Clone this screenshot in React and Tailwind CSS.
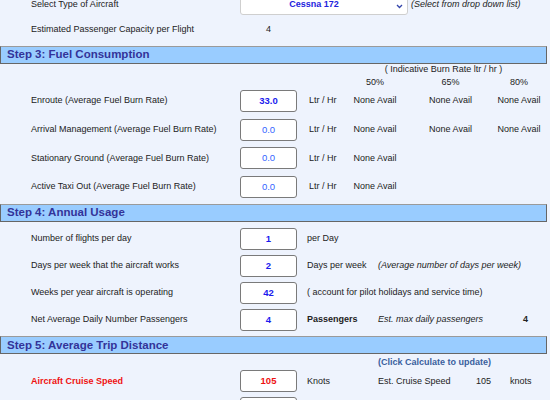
import React from "react";

const fuelRows = [
  { label: "Enroute (Average Fuel Burn Rate)", value: "33.0", bold: true, avail: 3 },
  { label: "Arrival Management (Average Fuel Burn Rate)", value: "0.0", bold: false, avail: 3 },
  { label: "Stationary Ground (Average Fuel Burn Rate)", value: "0.0", bold: false, avail: 1 },
  { label: "Active Taxi Out (Average Fuel Burn Rate)", value: "0.0", bold: false, avail: 1 },
];

const StepHeader = ({ title, className = "" }) => (
  <div
    className={`h-[18px] w-[547px] flex items-center pl-[6px] bg-[#99ccff] border border-[#666] border-t-[#9a9a9a] text-[11.5px] font-bold text-[#333399] ${className}`}
  >
    {title}
  </div>
);

const Box = ({ value, className = "" }) => (
  <div
    className={`w-[57px] h-[22px] shrink-0 bg-white border border-[#7a7a7a] rounded-[3px] flex items-center justify-center text-[9.5px] ${className}`}
  >
    {value}
  </div>
);

const Label = ({ children, className = "" }) => (
  <div className={`w-[240px] shrink-0 pl-[31px] whitespace-nowrap ${className}`}>{children}</div>
);

const App = () => {
  return (
    <div className="w-[550px] h-[400px] overflow-hidden bg-[#eef3fd] text-[#222] text-[9px] font-['Liberation_Sans',Arial,sans-serif]">
      {/* Aircraft selection */}
      <div className="flex items-center h-[20px] mt-[-5px]">
        <Label>Select Type of Aircraft</Label>
        <div className="relative w-[168px] h-[20px] bg-white border border-[#cfcfcf] rounded-[3px] flex items-center justify-center">
          <span className="font-bold text-[#2222dd] pr-[20px]">Cessna 172</span>
          <svg className="absolute right-[4px] top-[8px]" width="7" height="5" viewBox="0 0 7 5">
            <polyline points="1,1 3.5,3.5 6,1" fill="none" stroke="#3344aa" strokeWidth="1.3" />
          </svg>
        </div>
        <span className="ml-[3px] italic whitespace-nowrap">(Select from drop down list)</span>
      </div>
      <div className="flex items-center h-[20px] mt-[5px]">
        <Label>Estimated Passenger Capacity per Flight</Label>
        <div className="w-[57px] text-center">4</div>
      </div>

      {/* Step 3 */}
      <StepHeader title="Step 3: Fuel Consumption" className="mt-[6px]" />
      <div className="flex h-[12px] items-center">
        <div className="w-[337px] shrink-0" />
        <div className="w-[213px] text-center whitespace-nowrap">( Indicative Burn Rate ltr / hr )</div>
      </div>
      <div className="flex h-[12px] items-center mt-[1px]">
        <div className="w-[337px] shrink-0" />
        <div className="w-[76px] text-center">50%</div>
        <div className="w-[75px] text-center">65%</div>
        <div className="w-[62px] text-center">80%</div>
      </div>
      <div className="flex flex-col gap-[6.7px] mt-[1px]">
        {fuelRows.map((row) => (
          <div key={row.label} className="flex items-center h-[22px]">
            <Label>{row.label}</Label>
            <Box
              value={row.value}
              className={row.bold ? "font-bold text-[#1a1aee]" : "text-[#3366ff]"}
            />
            <div className="w-[40px] shrink-0 pl-[12px] whitespace-nowrap">Ltr / Hr</div>
            {Array.from({ length: row.avail }).map((_, i) => (
              <div
                key={i}
                className={`${i === 0 ? "w-[76px]" : i === 1 ? "w-[75px]" : "w-[62px]"} text-center whitespace-nowrap`}
              >
                None Avail
              </div>
            ))}
          </div>
        ))}
      </div>

      {/* Step 4 */}
      <StepHeader title="Step 4: Annual Usage" className="mt-[6px]" />
      <div className="flex flex-col gap-[4.6px] mt-[5.5px]">
        <div className="flex items-center h-[22.5px]">
          <Label>Number of flights per day</Label>
          <Box value="1" className="font-bold text-[#1a1aee]" />
          <div className="pl-[10px]">per Day</div>
        </div>
        <div className="flex items-center h-[22.5px]">
          <Label>Days per week that the aircraft works</Label>
          <Box value="2" className="font-bold text-[#1a1aee]" />
          <div className="w-[81px] shrink-0 pl-[10px] whitespace-nowrap">Days per week</div>
          <div className="italic whitespace-nowrap">(Average number of days per week)</div>
        </div>
        <div className="flex items-center h-[22.5px]">
          <Label>Weeks per year aircraft is operating</Label>
          <Box value="42" className="font-bold text-[#1a1aee]" />
          <div className="pl-[10px] whitespace-nowrap">( account for pilot holidays and service time)</div>
        </div>
        <div className="flex items-center h-[22.5px]">
          <Label>Net Average Daily Number Passengers</Label>
          <Box value="4" className="font-bold text-[#1a1aee]" />
          <div className="w-[81px] shrink-0 pl-[10px] font-bold">Passengers</div>
          <div className="w-[145px] shrink-0 italic whitespace-nowrap">Est. max daily passengers</div>
          <div className="font-bold">4</div>
        </div>
      </div>

      {/* Step 5 */}
      <StepHeader title="Step 5: Average Trip Distance" className="mt-[5px]" />
      <div className="flex items-center h-[16px]">
        <div className="w-[378px] shrink-0" />
        <div className="font-bold text-[#3a5f9e] whitespace-nowrap">(Click Calculate to update)</div>
      </div>
      <div className="flex flex-col gap-[5px]">
        <div className="flex items-center h-[22px]">
          <Label className="font-bold text-[#ee1111]">Aircraft Cruise Speed</Label>
          <Box value="105" className="font-bold text-[#ee1111]" />
          <div className="w-[81px] shrink-0 pl-[10px]">Knots</div>
          <div className="w-[98px] shrink-0 whitespace-nowrap">Est. Cruise Speed</div>
          <div className="w-[34px] shrink-0">105</div>
          <div>knots</div>
        </div>
        <div className="flex items-center h-[22px]">
          <Label />
          <Box value="" />
        </div>
      </div>
    </div>
  );
};

export default App;
